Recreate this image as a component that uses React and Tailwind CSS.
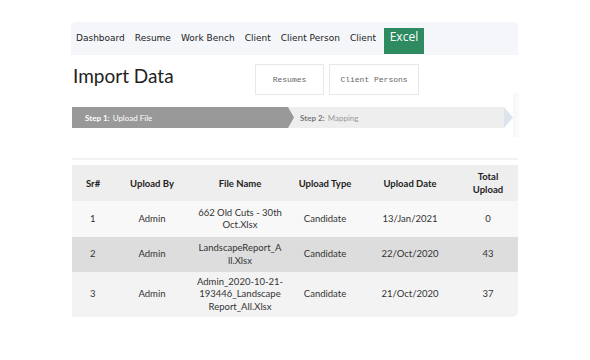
import React from "react";

const rows = [
  { sr: "1", by: "Admin", file: ["662 Old Cuts - 30th", "Oct.Xlsx"], type: "Candidate", date: "13/Jan/2021", total: "0", bg: "bg-[#f8f8f8]", h: "h-[36px]" },
  { sr: "2", by: "Admin", file: ["LandscapeReport_A", "ll.Xlsx"], type: "Candidate", date: "22/Oct/2020", total: "43", bg: "bg-[#dddddd]", h: "h-[35px]" },
  { sr: "3", by: "Admin", file: ["Admin_2020-10-21-", "193446_Landscape", "Report_All.Xlsx"], type: "Candidate", date: "21/Oct/2020", total: "37", bg: "bg-[#f3f3f3]", h: "h-[45px]" },
];

export default function App() {
  return (
    <div className="w-[590px] h-[360px] bg-white overflow-hidden">
      <div className="ml-[71px] w-[447px] pt-[22px]">
        {/* Navbar */}
        <nav className="h-[33px] bg-[#f5f6fa] rounded-t-[5px] flex items-start pl-[5px] gap-[10px] font-['DejaVu_Sans',sans-serif] text-[9px] text-[#222] leading-none">
          <span className="mt-[12px]">Dashboard</span>
          <span className="mt-[12px]">Resume</span>
          <span className="mt-[12px]">Work Bench</span>
          <span className="mt-[12px]">Client</span>
          <span className="mt-[12px]">Client Person</span>
          <span className="mt-[12px]">Client</span>
          <span className="mt-[6px] -ml-[2px] h-[26px] w-[40px] bg-[#2e8b61] text-white font-['Open_Sans',sans-serif] text-[12px] leading-none pt-[3px] text-center">
            Excel
          </span>
        </nav>

        {/* Heading + buttons */}
        <div className="flex mt-[9px]">
          <div className="w-[184px] pl-[2px] -mt-[1px] font-['Lato',sans-serif] text-[19px] text-[#222] leading-[26px]">
            Import Data
          </div>
          <div className="flex gap-[5px]">
            <div className="w-[69px] h-[31px] border border-[#e8e8e8] flex items-center justify-center font-['Liberation_Mono',monospace] text-[8px] text-[#666]">
              Resumes
            </div>
            <div className="w-[90px] h-[31px] border border-[#e8e8e8] flex items-center justify-center font-['Liberation_Mono',monospace] text-[8px] text-[#666]">
              Client Persons
            </div>
          </div>
        </div>

        {/* Stepper */}
        <div className="relative mt-[12px] ml-[1px] w-[441px]">
          <div className="flex h-[21px] font-['Lato',sans-serif] text-[8px] leading-none">
            <div className="relative w-[222px] h-full bg-[#999999] [clip-path:polygon(0_0,calc(100%-6px)_0,100%_50%,calc(100%-6px)_100%,0_100%)] flex items-center pl-[13px] text-white z-10">
              <span className="font-bold">Step 1:</span>
              <span className="ml-[3px]">Upload File</span>
            </div>
            <div className="flex-1 -ml-[6px] h-full bg-[#eeeeee] flex items-center pl-[12px] text-[#999]">
              <span className="font-bold text-[#777]">Step 2:</span>
              <span className="ml-[3px]">Mapping</span>
            </div>
            <div className="w-[9px] h-full bg-[#dbe4ef] [clip-path:polygon(0_0,100%_50%,0_100%)]"></div>
          </div>
          <div className="absolute -right-[8px] -top-[14px] w-[8px] h-[44px] bg-gradient-to-r from-[#f6f6f6] to-white"></div>
        </div>

        {/* Separator */}
        <div className="mt-[30px] ml-[1px] h-[2px] bg-[#f2f2f2]"></div>

        {/* Table */}
        <div className="mt-[5px] ml-[1px] w-[446px] rounded-br-[6px] overflow-hidden font-['Lato',sans-serif] text-[#333]">
          <table className="w-full border-collapse table-fixed">
            <colgroup>
              <col className="w-[40px]" />
              <col className="w-[80px]" />
              <col className="w-[96px]" />
              <col className="w-[74px]" />
              <col className="w-[96px]" />
              <col className="w-[60px]" />
            </colgroup>
            <thead>
              <tr className="bg-[#eeeeee] h-[36px] text-[9.5px] font-bold text-[#222] leading-[13px]">
                <th className="text-left pl-[14px] font-bold">Sr#</th>
                <th className="font-bold">Upload By</th>
                <th className="font-bold">File Name</th>
                <th className="font-bold">Upload Type</th>
                <th className="font-bold">Upload Date</th>
                <th className="font-bold">Total<br />Upload</th>
              </tr>
            </thead>
            <tbody>
              {rows.map((r) => (
                <tr key={r.sr} className={`${r.bg} ${r.h} text-[9.5px] leading-[12.5px] text-center`}>
                  <td className="text-left pl-[18px]">{r.sr}</td>
                  <td>{r.by}</td>
                  <td>
                    {r.file.map((l, i) => (
                      <div key={i}>{l}</div>
                    ))}
                  </td>
                  <td>{r.type}</td>
                  <td>{r.date}</td>
                  <td>{r.total}</td>
                </tr>
              ))}
            </tbody>
          </table>
        </div>
      </div>
    </div>
  );
}
